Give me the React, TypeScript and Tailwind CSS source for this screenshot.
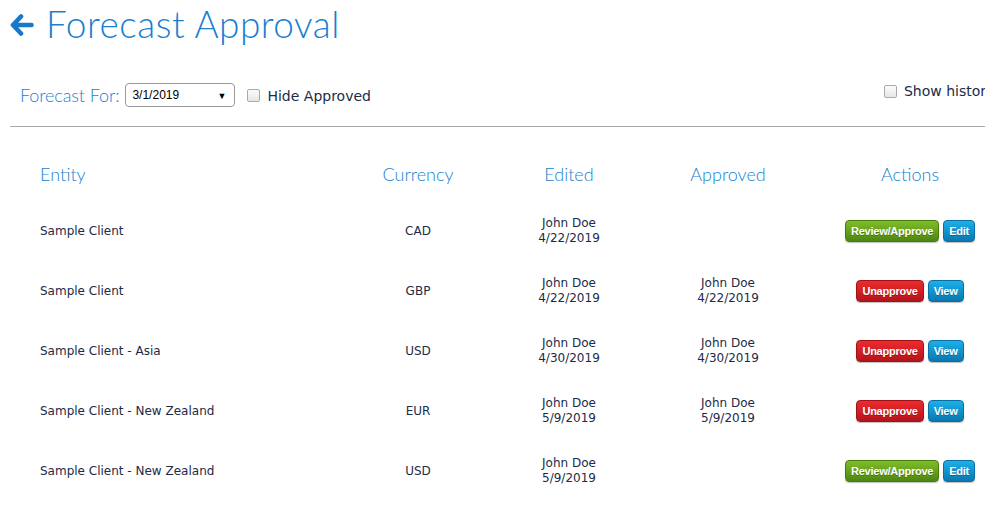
import React from "react";

type Row = {
  entity: string;
  currency: string;
  edited: [string, string];
  approved?: [string, string];
  approvedState: boolean;
};

const rows: Row[] = [
  { entity: "Sample Client", currency: "CAD", edited: ["John Doe", "4/22/2019"], approvedState: false },
  { entity: "Sample Client", currency: "GBP", edited: ["John Doe", "4/22/2019"], approved: ["John Doe", "4/22/2019"], approvedState: true },
  { entity: "Sample Client - Asia", currency: "USD", edited: ["John Doe", "4/30/2019"], approved: ["John Doe", "4/30/2019"], approvedState: true },
  { entity: "Sample Client - New Zealand", currency: "EUR", edited: ["John Doe", "5/9/2019"], approved: ["John Doe", "5/9/2019"], approvedState: true },
  { entity: "Sample Client - New Zealand", currency: "USD", edited: ["John Doe", "5/9/2019"], approvedState: false },
];

const heading = "font-['Lato',sans-serif] font-light text-[#1a7fd0]";
const body = "font-['DejaVu_Sans',sans-serif] text-[#1b2b48]";
const btn =
  "h-[22px] px-[5px] rounded-[4px] text-white text-[11px] font-bold tracking-[-0.25px] font-['Liberation_Sans',Arial,sans-serif] leading-[20px] shadow-[0_1px_1px_rgba(0,0,0,0.25)] [text-shadow:0_1px_0_rgba(0,0,0,0.25)]";

export default function App() {
  return (
    <div className="w-[985px] h-[508px] overflow-hidden bg-white">
      <div className="w-[1010px]">
        {/* Title */}
        <div className="flex items-center h-[48px] pl-[10px]">
          <svg width="24" height="24" viewBox="0 0 24 24" className="mt-[2px]">
            <path
              d="M11 3.5 L3 12 L11 20.5 M3.5 12 H21.5"
              fill="none"
              stroke="#1a78c8"
              strokeWidth="4.6"
              strokeLinecap="round"
              strokeLinejoin="round"
            />
          </svg>
          <h1 className={`${heading} ml-[12px] text-[37px] leading-[48px] tracking-[0.5px]`}>Forecast Approval</h1>
        </div>

        {/* Filter row */}
        <div className="flex items-start mt-[35px] pl-[20px]">
          <div className="flex items-center h-[24px]">
            <span className={`${heading} text-[18px] tracking-[-0.1px]`}>Forecast For:</span>
            <div className="ml-[6px] w-[110px] h-[24px] border border-[#999] rounded-[4px] flex items-center justify-between pl-[6px] pr-[8px]">
              <span className="font-['Liberation_Sans',Arial,sans-serif] text-[12px] text-black">3/1/2019</span>
              <span className="text-[9px] text-black leading-none">▼</span>
            </div>
            <div className="ml-[12px] w-[13px] h-[13px] border border-[#aaa] rounded-[2px] bg-gradient-to-b from-[#fcfcfc] to-[#e6e6e6]" />
            <span className={`${body} ml-[7px] text-[14px] mt-[2px]`}>Hide Approved</span>
          </div>
          <div className="flex items-center ml-[513px] -mt-[4px] h-[24px]">
            <div className="w-[13px] h-[13px] border border-[#aaa] rounded-[2px] bg-gradient-to-b from-[#fcfcfc] to-[#e6e6e6]" />
            <span className={`${body} ml-[7px] text-[14px] mt-[1px]`}>Show history</span>
          </div>
        </div>

        <div className="ml-[10px] mt-[19px] h-px bg-[#a9a9a9]" />

        {/* Table */}
        <div className="ml-[25px] mt-[22px]">
          <div className="grid grid-cols-[315px_156px_146px_172px_192px] h-[50px] items-center">
            <div className={`${heading} text-[18px] pl-[15px]`}>Entity</div>
            <div className={`${heading} text-[18px] text-center`}>Currency</div>
            <div className={`${heading} text-[18px] text-center`}>Edited</div>
            <div className={`${heading} text-[18px] text-center`}>Approved</div>
            <div className={`${heading} text-[18px] text-center`}>Actions</div>
          </div>
          {rows.map((r, i) => (
            <div key={i} className="grid grid-cols-[315px_156px_146px_172px_192px] h-[60px] items-center pt-[3px]">
              <div className={`${body} text-[12px] pl-[15px]`}>{r.entity}</div>
              <div className={`${body} text-[12px] text-center`}>{r.currency}</div>
              <div className={`${body} text-[12px] text-center leading-[15px]`}>
                <div>{r.edited[0]}</div>
                <div>{r.edited[1]}</div>
              </div>
              <div className={`${body} text-[12px] text-center leading-[15px]`}>
                {r.approved && (
                  <>
                    <div>{r.approved[0]}</div>
                    <div>{r.approved[1]}</div>
                  </>
                )}
              </div>
              <div className="flex justify-center gap-[4px]">
                {r.approvedState ? (
                  <>
                    <button className={`${btn} bg-gradient-to-b from-[#ee2a2e] to-[#b5141b] border border-[#a01218]`}>Unapprove</button>
                    <button className={`${btn} bg-gradient-to-b from-[#1cb0ea] to-[#0a78b0] border border-[#086ea3]`}>View</button>
                  </>
                ) : (
                  <>
                    <button className={`${btn} bg-gradient-to-b from-[#80bd2a] to-[#4d870e] border border-[#467c0c]`}>Review/Approve</button>
                    <button className={`${btn} bg-gradient-to-b from-[#1cb0ea] to-[#0a78b0] border border-[#086ea3]`}>Edit</button>
                  </>
                )}
              </div>
            </div>
          ))}
        </div>
      </div>
    </div>
  );
}
